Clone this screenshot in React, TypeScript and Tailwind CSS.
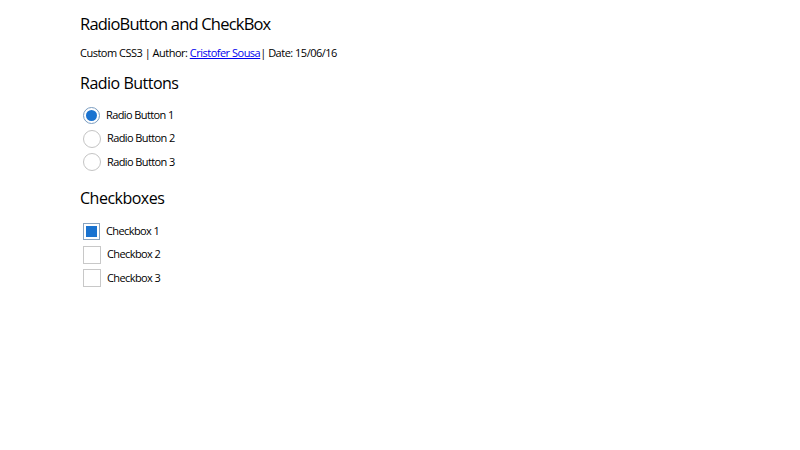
import React from 'react';

const radios = ['Radio Button 1', 'Radio Button 2', 'Radio Button 3'];
const checks = ['Checkbox 1', 'Checkbox 2', 'Checkbox 3'];

export default function App() {
  return (
    <div className="min-h-[450px] bg-white pl-[80px] pt-[12px] text-black" style={{ fontFamily: '"Open Sans", sans-serif' }}>
      <h1 className="text-[16.5px] leading-[24px] tracking-[-0.8px]">RadioButton and CheckBox</h1>
      <p className="mt-[9px] text-[11px] leading-[16px] tracking-[-0.5px]">
        Custom CSS3 | Author: <a href="#" className="text-[#0000ee] underline">Cristofer Sousa</a>| Date: 15/06/16
      </p>

      <h2 className="mt-[11px] text-[16px] leading-[22px] tracking-[-0.5px]">Radio Buttons</h2>
      <div className="mt-[12px] flex flex-col gap-[5.5px]">
        {radios.map((label, i) => (
          <label key={label} className="flex h-[18px] items-center text-[11px] tracking-[-0.6px]">
            {i === 0 ? (
              <span className="ml-[3px] flex h-[17px] w-[17px] items-center justify-center rounded-full border border-[#7a9cc0] bg-white">
                <span className="h-[11px] w-[11px] rounded-full bg-[#1a73d0]" />
              </span>
            ) : (
              <span className="ml-[3px] h-[18px] w-[18px] rounded-full border border-[#c4c4c4] bg-white" />
            )}
            <span className="ml-[6px]">{label}</span>
          </label>
        ))}
      </div>

      <h2 className="mt-[16px] text-[16px] leading-[22px] tracking-[-0.5px]">Checkboxes</h2>
      <div className="mt-[13px] flex flex-col gap-[5.5px]">
        {checks.map((label, i) => (
          <label key={label} className="flex h-[18px] items-center text-[11px] tracking-[-0.6px]">
            {i === 0 ? (
              <span className="ml-[3px] flex h-[17px] w-[17px] items-center justify-center border border-[#8aa4c0] bg-white">
                <span className="h-[11px] w-[11px] bg-[#1a73d0]" />
              </span>
            ) : (
              <span className="ml-[3px] h-[18px] w-[18px] border border-[#c8c8c8] bg-white" />
            )}
            <span className="ml-[6px]">{label}</span>
          </label>
        ))}
      </div>
    </div>
  );
}
